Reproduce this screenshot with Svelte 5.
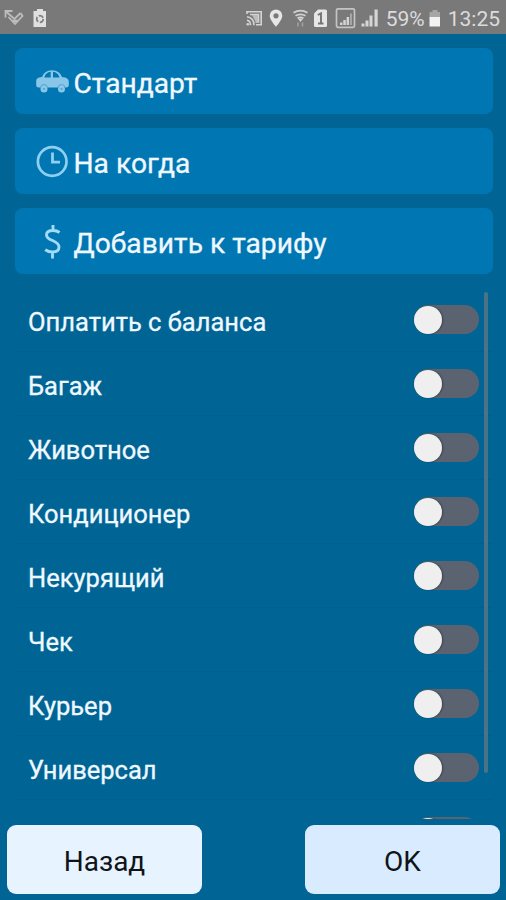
<script lang="ts">
  type Option = { label: string; enabled: boolean };

  let options: Option[] = $state([
    { label: 'Оплатить с баланса', enabled: false },
    { label: 'Багаж', enabled: false },
    { label: 'Животное', enabled: false },
    { label: 'Кондиционер', enabled: false },
    { label: 'Некурящий', enabled: false },
    { label: 'Чек', enabled: false },
    { label: 'Курьер', enabled: false },
    { label: 'Универсал', enabled: false },
    { label: '', enabled: false },
  ]);

  const settings = [
    { icon: 'car', label: 'Стандарт' },
    { icon: 'clock', label: 'На когда' },
    { icon: 'dollar', label: 'Добавить к тарифу' },
  ];
</script>

<div class="screen">
  <header class="status">
    <svg width="50" height="34" viewBox="0 0 50 34">
      <!-- missed call -->
      <g fill="none" stroke="#bdbdbd" stroke-width="1.8">
        <path d="M5.500 17.500v-6.500h7M6 11.500l8.500 7.500L20.500 13" />
        <path d="M8.500 17l6.500 7 7.500-8-2-3" />
        <path d="M12.500 21h5" stroke-width="2.500" />
      </g>
      <!-- battery with recycle mark -->
      <path d="M37 9h6v2h3v16H33.500V11H37z" fill="#e0e0e0" />
      <circle cx="40" cy="19" r="3.300" fill="none" stroke="#808080" stroke-width="1.800" stroke-dasharray="5.200 1.700" />
    </svg>

    <div class="status__right">
      <svg width="134" height="34" viewBox="246 0 134 34">
        <!-- cast -->
        <g fill="none" stroke="#d4d4d4" stroke-width="1.600">
          <path d="M247 14v-2.200h14.200v13H256" />
          <path d="M247 16.800q7 1 7 8.500M247 20.300q3.500.5 3.500 5M250 14.500h8.500v7.500h-3" />
        </g>
        <path d="M252 15h6v6.500h-2.500z" fill="#bcbcbc" />
        <circle cx="247.800" cy="24.300" r="1.300" fill="#d4d4d4" />
        <!-- location -->
        <path fill="#e6e6e6" fill-rule="evenodd" d="M276 9.500a6.300 6.300 0 0 0-6.300 6.300c0 4.200 6.300 11 6.300 11s6.300-6.800 6.300-11a6.300 6.300 0 0 0-6.300-6.300zm0 3.700a2.600 2.600 0 1 1 0 5.200a2.600 2.600 0 0 1 0-5.200z" />
        <!-- wifi -->
        <g fill="none" stroke="#d2d2d2" stroke-width="1.700">
          <path d="M293.500 12.800q7-4.500 14 0M295.500 15.800q5-3 10 0M297.500 18.300q3-2 6 0" />
        </g>
        <path d="M297.800 18.500h5.400l-2.700 3.500z" fill="#d2d2d2" />
        <path d="M298 22.500v4M302.500 22.500v4" stroke="#a0a0a0" stroke-width="1.600" />
        <!-- sim card -->
        <path d="M318 9.500h7.500q1.500 0 1.500 1.500v14.500q0 1.500-1.500 1.500h-10q-1.500 0-1.500-1.500V13.500z" fill="#e6e6e6" />
        <path d="M317.800 15l3.200-1.700v10M318 23.500h5.500" fill="none" stroke="#747474" stroke-width="1.900" />
        <!-- boxed signal -->
        <rect x="336.500" y="8.800" width="18" height="18.500" rx="1.500" fill="none" stroke="#c4c4c4" stroke-width="1.700" />
        <path d="M340 25v-2.500h2.500V25zM343.300 25v-5h2.500v5zM346.600 25v-8h2.500v8z" fill="#d4d4d4" />
        <path d="M350 25V13.500h2V25z" fill="#a6a6a6" />
        <!-- signal -->
        <path d="M361.500 26.500v-3h3v3zM365.500 26.500v-6h3v6zM369.500 26.500v-11h3v11z" fill="#d6d6d6" />
        <path d="M374.500 26.500v-17h3.200v17z" fill="#d6d6d6" />
      </svg>
      <span class="status__text status__text--battery">59%</span>
      <svg class="battery" width="12" height="34" viewBox="0 0 12 34">
        <path d="M3.500 10h5v2H11v5.500H.5V12h3z" fill="#a6a6a6" />
        <path d="M.5 17h10.500v9.500H.5z" fill="#f2f2f2" />
      </svg>
      <span class="status__text">13:25</span>
    </div>
  </header>

  <div class="settings">
    {#each settings as setting}
      <button class="setting">
        <span class="setting__icon">
          {#if setting.icon === 'car'}
            <svg width="34" height="24" viewBox="0 0 34 24">
              <path
                fill="#8ac6e8"
                fill-rule="evenodd"
                d="M1.200 12q0-3 3-3.500L7 8Q9.500 1.200 17 1.200T27 8l3 .5q3.300.8 3.800 4v3.500q0 2.500-3 2.500H4Q1.200 18.500 1.200 16zM9.300 8.500H15.700V2.800q-5 .4-6.400 5.700zM18 2.800V8.500h6.500q-1.500-5.300-6.500-5.700z"
              />
              <circle cx="9" cy="20" r="3.500" fill="#8ac6e8" />
              <circle cx="26.500" cy="20" r="3.500" fill="#8ac6e8" />
              <path d="M5.300 19q.5-3.500 3.700-3.500t3.700 3.500M22.800 19q.5-3.500 3.700-3.500t3.700 3.500" fill="none" stroke="#4da4d1" stroke-width="1" />
              <circle cx="9" cy="20" r="1.100" fill="#4da4d1" />
              <circle cx="26.500" cy="20" r="1.100" fill="#4da4d1" />
            </svg>
          {:else if setting.icon === 'clock'}
            <svg width="34" height="34" viewBox="0 0 34 34" fill="none" stroke="#8fd0f2">
              <circle cx="17.200" cy="17.500" r="14.300" stroke-width="2.700" />
              <path d="M17.500 8.500v9.600H25" stroke-width="2.800" />
            </svg>
          {:else}
            <svg width="34" height="36" viewBox="0 0 34 36" fill="none" stroke="#a2daf7" stroke-width="2.900">
              <path d="M24.500 9.500q-2.500-2-6.500-2-6.500 0-6.500 4.500 0 3.200 6 5.500 6.500 2.800 6.500 6.500 0 5-6.500 5-4 0-7.300-2.300M18 2v6M17.500 28.500V35.500" />
            </svg>
          {/if}
        </span>
        <span class="setting__label">{setting.label}</span>
      </button>
    {/each}
  </div>

  <div class="options">
    {#each options as option}
      <label class="option">
        <span class="option__label">{option.label}</span>
        <input class="option__input" type="checkbox" bind:checked={option.enabled} />
        <span class="toggle" class:toggle--on={option.enabled}>
          <span class="toggle__knob"></span>
        </span>
      </label>
    {/each}
    <div class="scrollbar"></div>
  </div>

  <footer class="actions">
    <button class="action">Назад</button>
    <button class="action action--primary">OK</button>
  </footer>
</div>

<style>
  :global(body) {
    background: #006595;
  }

  .screen {
    display: flex;
    flex-direction: column;
    box-sizing: border-box;
    height: 900px;
    overflow: hidden;
    background: #006595;
    color: #f0f8ff;
    font-family: Roboto, sans-serif;
  }

  button {
    margin: 0;
    border: 0;
    font-family: inherit;
  }

  svg {
    display: block;
    flex: none;
  }

  /* Status bar */
  .status {
    display: flex;
    flex: none;
    justify-content: space-between;
    height: 34px;
    background: #797979;
  }

  .status__right {
    display: flex;
    align-items: center;
    padding-right: 6px;
  }

  .status__text {
    color: #dcdcdc;
    font-size: 21px;
    line-height: 34px;
    padding-top: 4px;
  }

  .status__text--battery {
    margin-left: 6px;
  }

  .battery {
    margin: 0 7px 0 4px;
  }

  /* Large setting buttons */
  .settings {
    display: flex;
    flex: none;
    flex-direction: column;
    gap: 14px;
    padding: 14px 13.5px 0 14.5px;
  }

  .setting {
    display: flex;
    align-items: center;
    height: 66px;
    padding: 0 0 0 20px;
    border-radius: 8px;
    background: #0077b2;
    color: #f0f8ff;
  }

  .setting__icon {
    width: 34px;
    margin-right: 5px;
  }

  .setting__label {
    padding-top: 6px;
    font-size: 28.2px;
    line-height: 34px;
    -webkit-text-stroke: 0.3px;
  }

  /* Option list, cut off by the footer */
  .options {
    position: relative;
    flex: none;
    height: 531px;
    margin: 14px 14px 0;
    overflow: hidden;
  }

  .option {
    display: flex;
    align-items: center;
    justify-content: space-between;
    box-sizing: border-box;
    height: 64px;
    padding: 0 13px 0 14px;
    border-bottom: 1px solid #005f8e;
  }

  .option__label {
    padding-top: 5px;
    font-size: 25.5px;
    line-height: 32px;
    -webkit-text-stroke: 0.3px;
  }

  .option__input {
    position: absolute;
    opacity: 0;
  }

  .toggle {
    display: flex;
    align-items: center;
    box-sizing: border-box;
    width: 65px;
    height: 29px;
    border-radius: 15px;
    background: #5c6370;
  }

  .toggle--on {
    justify-content: flex-end;
    background: #0077b2;
  }

  .toggle__knob {
    width: 28px;
    height: 28px;
    border-radius: 50%;
    background: #efefef;
    box-shadow: 1px 0 2px rgba(0, 0, 0, 0.35);
  }

  .scrollbar {
    position: absolute;
    top: 4px;
    right: 4px;
    width: 4px;
    height: 481px;
    border-radius: 2px;
    background: #4b7387;
  }

  /* Bottom buttons */
  .actions {
    display: flex;
    flex: none;
    justify-content: space-between;
    padding: 6px 6px 0 7px;
  }

  .action {
    width: 195px;
    height: 69px;
    padding: 4px 0 0;
    border-radius: 9px;
    background: #e7f3ff;
    color: #101418;
    font-size: 28px;
  }

  .action--primary {
    background: #d8ebff;
  }
</style>
